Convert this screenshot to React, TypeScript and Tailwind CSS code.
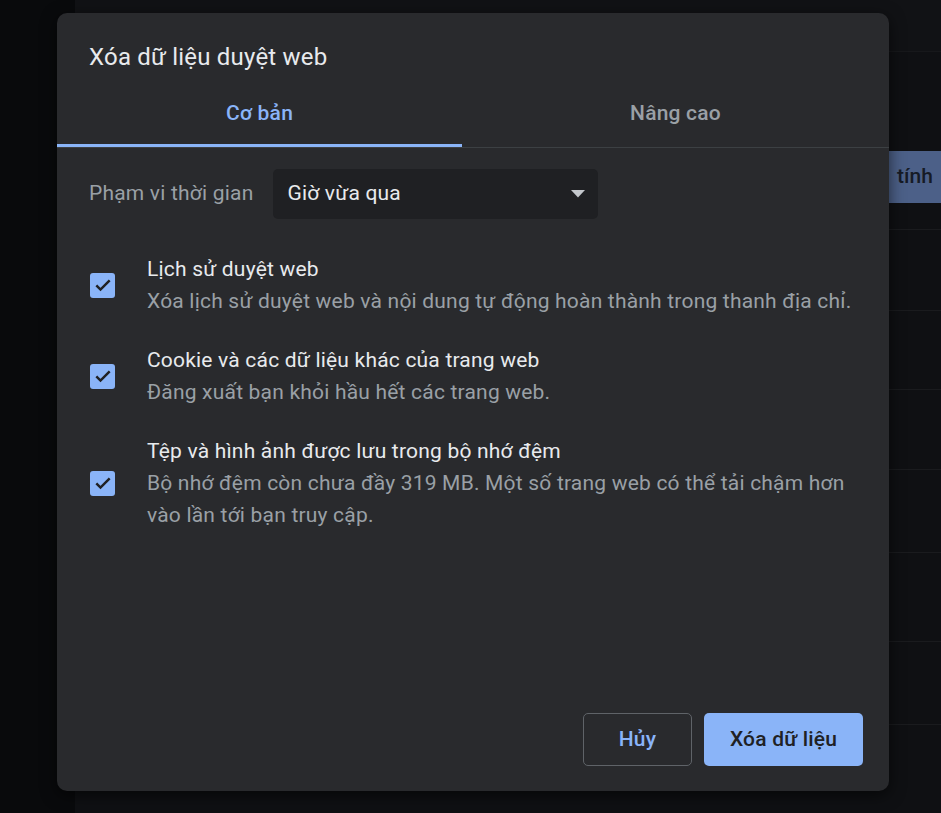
import React from "react";

const font = { fontFamily: "Roboto, 'Noto Sans', Arial, sans-serif" };

function Check() {
  return (
    <div className="w-[25px] h-[25px] ml-[1px] shrink-0 rounded-[3px] bg-[#8ab4f8] flex items-center justify-center">
      <svg width="20" height="20" viewBox="0 0 24 24" fill="none">
        <path d="M4 12.5l5 5 11-11" stroke="#202124" strokeWidth="3" strokeLinecap="butt" strokeLinejoin="miter" />
      </svg>
    </div>
  );
}

function Row({ title, lines }: { title: string; lines: string[] }) {
  return (
    <div className="flex items-center gap-[32px]">
      <Check />
      <div className="flex flex-col text-[21px] leading-[32px] tracking-[0.2px]">
        <div className="text-[#e8eaed] whitespace-nowrap">{title}</div>
        {lines.map((l) => (
          <div key={l} className="text-[#9aa0a6] whitespace-nowrap">{l}</div>
        ))}
      </div>
    </div>
  );
}

export default function App() {
  return (
    <div className="relative w-[941px] h-[813px] overflow-hidden bg-[#0f1013]" style={font}>
      {/* background page */}
      <div className="flex w-full h-full">
        <div className="w-[75px] shrink-0 h-full bg-[#090a0c]" />
        <div className="flex-1 flex flex-col">
          <div className="h-[52px] border-b border-[#17181b] bg-[#111215]" />
          <div className="h-[178px] border-b border-[#1a1b1e] flex flex-col justify-end pb-[26px]">
            <div className="flex justify-end mr-[-40px]">
              <div className="w-[100px] h-[52px] bg-[#4c6088] flex items-center pl-[16px] text-[21px] font-medium text-[#161b26] whitespace-nowrap">
                tính
              </div>
            </div>
          </div>
          <div className="h-[81px] border-b border-[#1a1b1e]" />
          <div className="h-[79px] border-b border-[#1a1b1e]" />
          <div className="h-[80px] border-b border-[#1a1b1e]" />
          <div className="h-[83px] border-b border-[#1a1b1e]" />
          <div className="h-[89px] border-b border-[#1a1b1e]" />
          <div className="h-[83px] border-b border-[#1a1b1e]" />
        </div>
      </div>

      {/* dialog */}
      <div className="absolute left-[57px] top-[13px] w-[832px] h-[778px] rounded-[10px] bg-[#292a2d] shadow-[0_4px_16px_rgba(0,0,0,0.6)] flex flex-col">
        <div className="pt-[28px] px-[32px] h-[60px] text-[24px] leading-[32px] tracking-[0.2px] text-[#e8eaed]">
          Xóa dữ liệu duyệt web
        </div>
        <div className="mt-[10px] flex border-b border-[#3c4043]">
          <div className="w-[405px] h-[64px] flex flex-col">
            <div className="flex-1 flex items-center justify-center text-[21px] tracking-[0.2px] font-medium text-[#8ab4f8]">Cơ bản</div>
            <div className="h-[3px] bg-[#8ab4f8]" />
          </div>
          <div className="flex-1 h-[64px] flex flex-col">
            <div className="flex-1 flex items-center justify-center text-[21px] tracking-[0.2px] font-medium text-[#9aa0a6]">Nâng cao</div>
            <div className="h-[3px]" />
          </div>
        </div>

        <div className="px-[32px] mt-[21px] flex items-center gap-[20px]">
          <div className="text-[21px] tracking-[0.2px] text-[#9aa0a6] whitespace-nowrap">Phạm vi thời gian</div>
          <div className="w-[325px] h-[50px] rounded-[5px] bg-[#1f2023] flex items-center justify-between pl-[14px] pr-[13px]">
            <span className="text-[21px] tracking-[0.2px] text-[#e8eaed]">Giờ vừa qua</span>
            <svg width="14" height="8" viewBox="0 0 14 8">
              <path d="M0 0h14L7 7.5z" fill="#c4c7cc" />
            </svg>
          </div>
        </div>

        <div className="px-[32px] mt-[34px] flex flex-col gap-[27px]">
          <Row
            title="Lịch sử duyệt web"
            lines={["Xóa lịch sử duyệt web và nội dung tự động hoàn thành trong thanh địa chỉ."]}
          />
          <Row title="Cookie và các dữ liệu khác của trang web" lines={["Đăng xuất bạn khỏi hầu hết các trang web."]} />
          <Row
            title="Tệp và hình ảnh được lưu trong bộ nhớ đệm"
            lines={[
              "Bộ nhớ đệm còn chưa đầy 319 MB. Một số trang web có thể tải chậm hơn",
              "vào lần tới bạn truy cập.",
            ]}
          />
        </div>

        <div className="mt-auto flex justify-end gap-[12px] pr-[26px] pb-[25px]">
          <button className="w-[109px] h-[53px] rounded-[5px] border border-[#5f6368] text-[21px] tracking-[0.2px] font-medium text-[#8ab4f8]">
            Hủy
          </button>
          <button className="w-[159px] h-[53px] rounded-[5px] bg-[#8ab4f8] text-[21px] tracking-[0.2px] font-medium text-[#202124]">
            Xóa dữ liệu
          </button>
        </div>
      </div>
    </div>
  );
}
